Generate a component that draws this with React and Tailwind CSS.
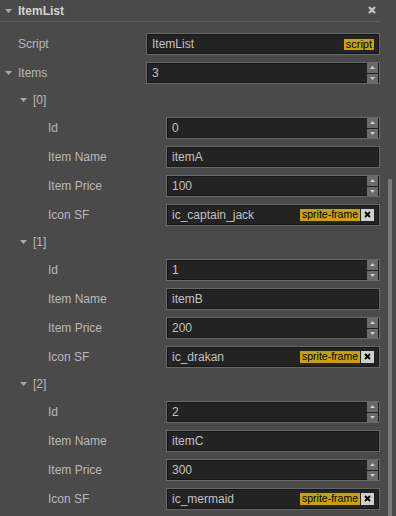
import React from "react";

const Tri = ({ className = "" }) => (
  <svg width="7" height="4" viewBox="0 0 7 4" className={className}>
    <polygon points="0,0 7,0 3.5,4" fill="#a8a8a8" />
  </svg>
);

const Box = ({ children, className = "" }) => (
  <div
    className={
      "flex h-[22px] flex-1 items-center border border-[#686868] bg-[#232323] shadow-[inset_0_0_0_1px_#161616] text-[12px] text-[#c2c2c2] " +
      className
    }
  >
    {children}
  </div>
);

const Stepper = () => (
  <div className="ml-auto mr-[1px] flex flex-col gap-[1px]">
    <div className="flex h-[10px] w-[11px] items-center justify-center bg-[#6a6a6a]">
      <svg width="5" height="3" viewBox="0 0 5 3">
        <polygon points="0,3 5,3 2.5,0" fill="#d0d0d0" />
      </svg>
    </div>
    <div className="flex h-[9px] w-[11px] items-center justify-center bg-[#6a6a6a]">
      <svg width="5" height="3" viewBox="0 0 5 3">
        <polygon points="0,0 5,0 2.5,3" fill="#d0d0d0" />
      </svg>
    </div>
  </div>
);

const NumBox = ({ v }) => (
  <Box>
    <span className="pl-[5px]">{v}</span>
    <Stepper />
  </Box>
);

const TextBox = ({ v }) => (
  <Box>
    <span className="pl-[5px]">{v}</span>
  </Box>
);

const SpriteBox = ({ v }) => (
  <Box>
    <span className="pl-[5px]">{v}</span>
    <div className="ml-auto mr-[5px] flex items-center gap-[1px]">
      <span className="flex h-[12px] items-center bg-[#c9a300] px-[2px] text-[10.5px] leading-none text-black">
        sprite-frame
      </span>
      <span className="flex h-[12px] w-[13px] items-center justify-center bg-[#cfcfcf]">
        <svg width="7" height="7" viewBox="0 0 7 7">
          <path d="M1 1 L6 6 M6 1 L1 6" stroke="#000" strokeWidth="1.8" />
        </svg>
      </span>
    </div>
  </Box>
);

const Field = ({ label, children, h = "h-[29px]" }) => (
  <div className={"flex items-center pl-[48px] " + h}>
    <div className="w-[118px] text-[12px] text-[#b8b8b8]">{label}</div>
    {children}
  </div>
);

const Section = ({ idx, id, name, price, sf }) => (
  <>
    <div className="flex h-[26px] items-center pl-[20px] text-[12px] text-[#b8b8b8]">
      <Tri />
      <span className="ml-[6px]">[{idx}]</span>
    </div>
    <Field label="Id">
      <NumBox v={id} />
    </Field>
    <Field label="Item Name">
      <TextBox v={name} />
    </Field>
    <Field label="Item Price">
      <NumBox v={price} />
    </Field>
    <Field label="Icon SF">
      <SpriteBox v={sf} />
    </Field>
  </>
);

export default function App() {
  return (
    <div
      className="flex h-[516px] w-[396px] overflow-hidden bg-[#4a4a4a]"
      style={{ fontFamily: '"Liberation Sans", Arial, sans-serif' }}
    >
      <div className="flex w-[380px] flex-col">
        <div className="flex h-[22px] items-center border-b border-[#5f5f5f] pl-[5px] pr-[4px]">
          <Tri />
          <span className="ml-[6px] text-[12px] font-bold text-[#d2d2d2]">ItemList</span>
          <svg width="8" height="8" viewBox="0 0 8 8" className="ml-auto mb-[2px]">
            <path d="M1 1 L7 7 M7 1 L1 7" stroke="#c8c8c8" strokeWidth="2.2" />
          </svg>
        </div>
        <div className="flex flex-col pt-[8px]">
          <div className="flex h-[28px] items-center pl-[18px]">
            <div className="w-[128px] text-[12px] text-[#b8b8b8]">Script</div>
            <Box>
              <span className="pl-[5px]">ItemList</span>
              <span className="ml-auto mr-[5px] flex h-[11px] items-center bg-[#c9a300] px-[2px] text-[11px] leading-none text-black">
                script
              </span>
            </Box>
          </div>
          <div className="flex h-[29px] items-center pl-[5px]">
            <Tri />
            <div className="ml-[6px] w-[128px] text-[12px] text-[#b8b8b8]">Items</div>
            <NumBox v="3" />
          </div>
          <Section idx="0" id="0" name="itemA" price="100" sf="ic_captain_jack" />
          <Section idx="1" id="1" name="itemB" price="200" sf="ic_drakan" />
          <Section idx="2" id="2" name="itemC" price="300" sf="ic_mermaid" />
        </div>
      </div>
      <div className="flex w-[16px] flex-col pl-[8px] pt-[179px]">
        <div className="w-[4px] flex-1 bg-[#7a7a7a]" />
      </div>
    </div>
  );
}
